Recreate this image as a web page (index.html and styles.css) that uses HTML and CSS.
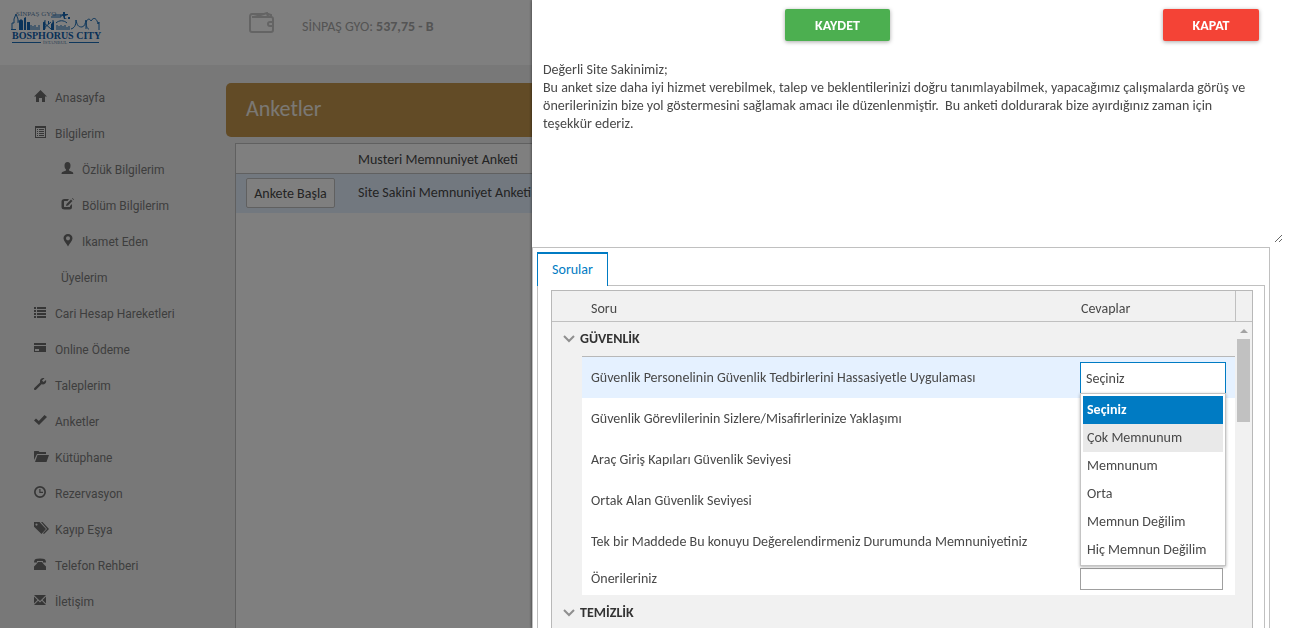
FILE: index.html
```
<!DOCTYPE html>
<html lang="tr">
<head>
<meta charset="utf-8">
<title>Anketler</title>
<link rel="stylesheet" href="styles.css">
</head>
<body>
<div class="page">
  <header class="topbar">
    <a class="logo" href="#" aria-label="Sinpaş GYO Bosphorus City İstanbul">
      <svg width="92" height="36" viewBox="0 0 92 36">
        <g class="logo-lines">
          <path d="M1 20V13h2V9l2-5 2 5v4M7 11h5M0 19.500h5M42 5h8v2H40M34 10v9M42 10v9M32 12l8 7M40 12l-8 7M45 13c3-3 8-3 11 0M60 19c3-1 5-3 5-9 1 5 2 7 6 7 3-1 3-3 4-7 0 6 1 9 3 9M75 19v-5c0-4 3-7 5-3 3-5 6-2 7 3l1-2v8"/>
          <path d="M20 20v-5M22 20v-4M24 20v-5M26 20v-3M28 20v-5M46 20v-5M48 20v-4M50 20v-5M52 20v-4M54 20v-5M56 20v-3M58 20v-4"/>
        </g>
        <path class="logo-fill" d="M8 20v-9l2-2 2 2v9zM13 20V8l2-1v13zM16 20v-8h3v8zM32 13l2-2v9h-2zM40 14l3-3v9h-3zM52 2h2v2h3v1l-3 1v2l2 1-3 0-1-3-3-1 3-1zM57 7h2v2h-2zM37 11h1v3h-1z"/>
        <text class="logo-small top" x="5" y="6">SİNPAŞ GYO</text>
        <text class="logo-name" x="1" y="29">BOSPHORUS CITY</text>
        <path class="logo-lines" d="M1 32.500h29M58 32.500h30"/>
        <text class="logo-small" x="32" y="34">İSTANBUL</text>
      </svg>
    </a>
    <div class="account">
      <svg class="wallet" width="26" height="22" viewBox="0 0 26 22">
        <path d="M3 5h19q2 0 2 2v11q0 2-2 2H3q-2 0-2-2V5q0-3 2-3h12M5 5l13-4 1 4M19 2l3 1v2M24 10h-3q-2 0-2 2t2 2h3"/>
      </svg>
      <span class="balance">SİNPAŞ GYO: <b>537,75 - B</b></span>
    </div>
  </header>

  <div class="body">
    <nav class="sidebar">
      <a href="#"><svg viewBox="0 0 13 13"><path d="M6.500 0L13 6.500h-2V12H8V8H5v4H2V6.500H0z"/></svg>Anasayfa</a>
      <a href="#"><svg viewBox="0 0 13 13"><path fill-rule="evenodd" d="M1 0h11v12H1zM2 2v9h9V2zM3 3h1v1H3zm2 0h5v1H5zM3 5h1v1H3zm2 0h5v1H5zM3 7h1v1H3zm2 0h5v1H5zM3 9h1v1H3zm2 0h5v1H5z"/></svg>Bilgilerim</a>
      <a class="sub" href="#"><svg viewBox="0 0 13 13"><path d="M6.500 0c2 0 3 1.500 3 3.500S9 6.500 8 7.500v1l3.500 1.500q.8.500.8 2H.5q0-1.500.8-2L5 8.500v-1C4 6.500 3.500 5.500 3.500 3.500S4.500 0 6.500 0z"/></svg>Özlük Bilgilerim</a>
      <a class="sub" href="#"><svg viewBox="0 0 13 13"><path d="M3.500 1H8L6.500 3h-3Q3 3 3 3.500v5q0 .5.500.5h5q.5 0 .5-.5V8l2-2v3q0 2.500-2.500 2.500h-5Q.5 11.500.5 9V3.500Q.5 1 3.500 1zM10 1.500l1.500 1.500-4.500 4.500-2 .5.500-2zM11 .5l.5-.5L13 1.500l-.5.5z"/></svg>Bölüm Bilgilerim</a>
      <a class="sub" href="#"><svg viewBox="0 0 13 13"><path fill-rule="evenodd" d="M7 0c2.500 0 4.500 1.900 4.500 4.300C11.500 7 8.500 9.500 7 12.500 5.500 9.500 2.500 7 2.500 4.300 2.500 1.900 4.500 0 7 0zM7 2.300a2 2 0 100 4.100 2 2 0 000-4.100z"/></svg>Ikamet Eden</a>
      <a class="sub plain" href="#">Üyelerim</a>
      <a href="#"><svg viewBox="0 0 13 13"><path d="M0 1h2v2H0zm3 0h9v2H3zM0 4h2v2H0zm3 0h9v2H3zM0 7h2v2H0zm3 0h9v2H3zM0 10h2v2H0zm3 0h9v2H3z"/></svg>Cari Hesap Hareketleri</a>
      <a href="#"><svg viewBox="0 0 13 13"><path fill-rule="evenodd" d="M0 1h12v2H0zM0 4h12v6H0zM1 7v2h4V7z"/></svg>Online Ödeme</a>
      <a href="#"><svg viewBox="0 0 13 13"><path d="M12 2L9.500 4 8 2.500 10.500.3C8 -.6 5.500 1 6 4.500L.3 10q-.6 1 0 1.700.8.700 1.700 0L7.500 6.300C10.500 7 13 5 12 2z"/></svg>Taleplerim</a>
      <a href="#"><svg viewBox="0 0 13 13"><path d="M0 6.500l2-2L4.800 7 10.500 1 13 3l-8 8z"/></svg>Anketler</a>
      <a href="#"><svg class="wide" viewBox="0 0 15 13"><path d="M0 10V1.500Q0 1 .5 1h4l1 1H12v2H3zM3.500 5H15l-2.500 7H1z"/></svg>Kütüphane</a>
      <a href="#"><svg viewBox="0 0 13 13"><path fill-rule="evenodd" d="M6 0a6 6 0 110 12A6 6 0 016 0zm0 1.700a4.300 4.300 0 100 8.600 4.300 4.300 0 000-8.600zM5.300 3h1.200v2.700H9V7H5.300z"/></svg>Rezervasyon</a>
      <a href="#"><svg class="wide" viewBox="0 0 15 13"><path fill-rule="evenodd" d="M0 0h5.500l6.500 7-4.500 5L0 4.800zM2.500 1.500a1 1 0 100 2.200 1 1 0 000-2.200zM7 0h1.500l6.500 7-5 5-1-.8L13 7z"/></svg>Kayıp Eşya</a>
      <a href="#"><svg viewBox="0 0 13 13"><path d="M0 4.500Q0 1 3 .8q3-.6 6 0 3 .2 3 3.700H9V3H3v1.500zM4 4h4l1.500 2L12 8.500V12H0V8.500L2.500 6z"/></svg>Telefon Rehberi</a>
      <a href="#"><svg viewBox="0 0 13 13"><path d="M0 1h12L6 7zM0 2.500L3.500 6 0 9.500zM12 2.500L8.500 6 12 9.500zM0 11l4.200-4.200L6 8.500l1.800-1.700L12 11z"/></svg>İletişim</a>
    </nav>

    <main class="content">
      <h1 class="banner">Anketler</h1>
      <div class="survey-box">
        <table class="surveys">
          <thead><tr><th class="action"></th><th>Musteri Memnuniyet Anketi</th></tr></thead>
          <tbody><tr><td class="action"><button type="button" class="start">Ankete Başla</button></td><td>Site Sakini Memnuniyet Anketi</td></tr></tbody>
        </table>
      </div>
    </main>
  </div>
</div>

<div class="shade"></div>

<section class="drawer" role="dialog" aria-label="Anket">
  <div class="actions">
    <button type="button" class="btn save">KAYDET</button>
    <button type="button" class="btn close">KAPAT</button>
  </div>
  <textarea class="intro" aria-label="Açıklama" spellcheck="false">Değerli Site Sakinimiz;
Bu anket size daha iyi hizmet verebilmek, talep ve beklentilerinizi doğru tanımlayabilmek, yapacağımız çalışmalarda görüş ve önerilerinizin bize yol göstermesini sağlamak amacı ile düzenlenmiştir.  Bu anketi doldurarak bize ayırdığınız zaman için teşekkür ederiz.</textarea>

  <div class="panel">
    <div class="tabs"><button type="button" class="tab" role="tab" aria-selected="true">Sorular</button></div>
    <div class="tab-body">
      <div class="grid">
        <table class="questions">
          <colgroup><col class="c-indent"><col><col class="c-answer"></colgroup>
          <thead><tr><th></th><th>Soru</th><th>Cevaplar</th></tr></thead>
          <tbody>
            <tr class="group"><td colspan="3"><svg class="chev" width="12" height="8" viewBox="0 0 12 8"><path d="M1 1l5 5 5-5"/></svg>GÜVENLİK</td></tr>
            <tr class="active"><td class="indent"></td><td class="ruled"><label for="q1">Güvenlik Personelinin Güvenlik Tedbirlerini Hassasiyetle Uygulaması</label></td>
              <td class="answer ruled">
                <div class="combo">
                  <input id="q1" class="combo-input" role="combobox" aria-expanded="true" aria-controls="q1-list" value="Seçiniz">
                  <ul class="menu" id="q1-list" role="listbox">
                    <li class="chosen" role="option" aria-selected="true">Seçiniz</li>
                    <li class="hover" role="option">Çok Memnunum</li>
                    <li role="option">Memnunum</li>
                    <li role="option">Orta</li>
                    <li role="option">Memnun Değilim</li>
                    <li role="option">Hiç Memnun Değilim</li>
                  </ul>
                </div>
              </td></tr>
            <tr><td class="indent"></td><td>Güvenlik Görevlilerinin Sizlere/Misafirlerinize Yaklaşımı</td><td></td></tr>
            <tr><td class="indent"></td><td>Araç Giriş Kapıları Güvenlik Seviyesi</td><td></td></tr>
            <tr><td class="indent"></td><td>Ortak Alan Güvenlik Seviyesi</td><td></td></tr>
            <tr><td class="indent"></td><td>Tek bir Maddede Bu konuyu Değerelendirmeniz Durumunda Memnuniyetiniz</td><td></td></tr>
            <tr class="short"><td class="indent"></td><td><label for="q6">Önerileriniz</label></td><td class="answer"><input id="q6" class="note" type="text"></td></tr>
            <tr class="group"><td colspan="3"><svg class="chev" width="12" height="8" viewBox="0 0 12 8"><path d="M1 1l5 5 5-5"/></svg>TEMİZLİK</td></tr>
          </tbody>
        </table>
        <div class="gutter">
          <div class="gutter-head"></div>
          <div class="scroll"><div class="arrow"></div><div class="thumb"></div></div>
        </div>
      </div>
    </div>
  </div>
</section>
</body>
</html>
```
FILE: styles.css
```
* { box-sizing: border-box; }
html, body { height: 100%; }
body {
  margin: 0;
  overflow: hidden;
  font: 14px/18px Calibri, Carlito, Lato, "Noto Sans", sans-serif;
  color: #484848;
  background: #f1f1f1;
}
button, input, textarea { font: inherit; color: inherit; }
table { border-collapse: collapse; table-layout: fixed; width: 100%; }
th { font-weight: 400; text-align: left; }

/* Page behind the drawer */
.page { height: 100%; display: flex; flex-direction: column; }
.topbar { height: 65px; background: #fff; display: flex; flex: none; }
.logo { width: 249px; padding: 10px 0 0 11px; }
.logo svg { display: block; }
.logo-lines { fill: none; stroke: #1d6fb8; stroke-width: 1; }
.logo-fill { fill: #1667b4; }
.logo-small { font: 5px "Liberation Serif", serif; fill: #5f87ad; }
.logo-small.top { font-size: 7px; }
.logo-name { font: bold 10px "Liberation Serif", serif; fill: #0f60ae; }
.account { display: flex; align-items: flex-start; gap: 27px; padding-top: 12px; color: #a8a8a8; }
.wallet { fill: none; stroke: #c8c8c8; stroke-width: 2; }
.balance { padding-top: 6px; }

.body { display: flex; flex: 1; min-height: 0; }
.sidebar { width: 226px; flex: none; padding-top: 15px; font: 12px/36px Roboto, sans-serif; }
.sidebar a { display: flex; align-items: center; height: 36px; padding-left: 34px; color: #7c7c7c; text-decoration: none; }
.sidebar svg { width: 13px; height: 13px; margin: 0 8px 3px 0; fill: #6c6c6c; }
.sidebar .wide { width: 15px; margin-right: 6px; }
.sidebar .sub { padding-left: 61px; }
.content { flex: 1; display: flex; flex-direction: column; padding-top: 18px; }
.banner { margin: 0; height: 54px; padding-left: 20px; border-radius: 5px; background: #c4964c; color: #f6f1e8; font-size: 22px; font-weight: 400; line-height: 52px; }
.survey-box { flex: 1; margin: 6px 0 0 9px; border: 1px solid #c0c0c0; border-bottom: 0; background: #fff; }
.surveys th { height: 29px; padding: 4px 0 0; border-bottom: 1px solid #c0c0c0; }
.surveys td { height: 40px; padding: 0; background: #e5f1ff; }
.surveys .action { width: 122px; padding-left: 10px; }
.start { display: block; height: 30px; width: 89px; padding: 1px 0 0; border: 1px solid #c0c0c0; border-radius: 2px; background: #fff; }
.shade { position: fixed; inset: 0; background: rgba(0, 0, 0, 0.5); }

/* Drawer */
.drawer { position: fixed; inset: 0 0 0 532px; display: flex; flex-direction: column; overflow: hidden; background: #fff; box-shadow: 0 0 3px rgba(0, 0, 0, 0.6); }
.actions { display: flex; justify-content: space-between; flex: none; padding: 9px 49px 0 253px; }
.btn { height: 32px; padding: 2px 0 0; border: 0; border-radius: 2px; color: #fff; font-weight: 700; box-shadow: 0 1px 4px rgba(0, 0, 0, 0.35); }
.save { width: 105px; background: #4caf50; }
.close { width: 96px; background: #f44336; }
.intro { flex: none; height: 190px; width: auto; margin: 12px 25px 0 1px; padding: 8px 25px 8px 10px; border: 0; outline: 0; background: transparent; resize: both; overflow: auto; }

.panel { flex: 1 0 auto; margin: 4px 38px 0 0; padding: 4px; border: 1px solid #c0c0c0; }
.tabs { display: flex; height: 34px; }
.tab { position: relative; z-index: 1; width: 71px; height: 34px; padding: 0; border: 1px solid #007bc3; border-top-width: 2px; border-bottom: 0; background: #fff; color: #007bc3; }
.tab-body { margin-top: -1px; padding: 4px 11px 0 13px; border: 1px solid #c0c0c0; }
.grid { display: flex; border: 1px solid #b8b8b8; }
.questions { flex: 1; width: auto; min-width: 0; }
.c-indent { width: 30px; }
.c-answer { width: 163px; }
.questions th { height: 30px; padding: 7px 9px 0; background: #f1f1f1; border-bottom: 1px solid #c0c0c0; }
.questions td { height: 41px; padding: 0 9px; }
.questions .indent { background: #f1f1f1; }
.questions .group td { height: 35px; padding: 1px 0 0 11px; background: #f1f1f1; color: #333; font-weight: 700; }
.questions .ruled { border-top: 1px solid #b8b8b8; }
.questions .active td { height: 42px; padding-top: 2px; }
.questions .active td:not(.indent) { background: #e5f1ff; }
.questions .short td { height: 33px; }
.chev { margin-right: 5px; fill: none; stroke: #8f8f8f; stroke-width: 2; }
.questions .answer { padding: 0 0 0 8px; }
.combo { position: relative; width: 146px; }
.combo-input { display: block; width: 146px; height: 32px; padding: 0 5px; border: 1px solid #007bc3; border-bottom-color: #c0c0c0; background: #fff; outline: 0; }
.menu { position: absolute; z-index: 2; top: 31px; left: 0; width: 146px; margin: 0; padding: 2px 2px 1px; list-style: none; border: 1px solid #c4c4c4; background: #fff; box-shadow: 0 1px 3px rgba(0, 0, 0, 0.3); }
.menu li { height: 28px; padding: 0 4px; line-height: 27px; white-space: nowrap; }
.menu .chosen { background: #007bc3; color: #fff; font-weight: 700; }
.menu .hover { background: #e9e9e9; }
.note { display: block; width: 143px; height: 22px; border: 1px solid #9f9f9f; background: #fff; }
.gutter { width: 17px; flex: none; display: flex; flex-direction: column; }
.gutter-head { height: 31px; background: #f1f1f1; border: solid #c0c0c0; border-width: 0 0 1px 1px; }
.scroll { flex: 1; background: #f1f1f1; padding: 7px 2px 0; }
.arrow { margin: 0 auto 6px; width: 8px; border: solid transparent; border-width: 0 4px 4px; border-bottom-color: #a3a3a3; }
.thumb { height: 83px; background: #c1c1c1; }
```
